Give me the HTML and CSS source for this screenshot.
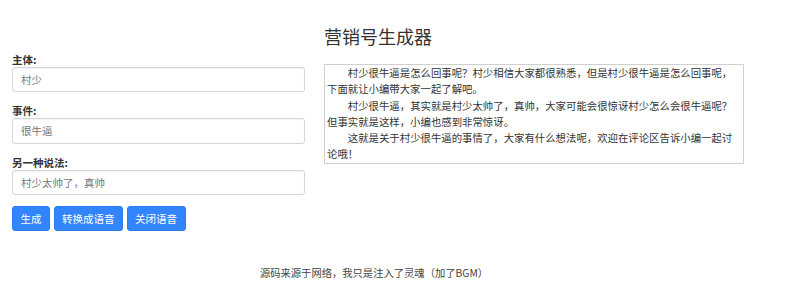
FILE: index.html
```html
<!DOCTYPE html>
<html lang="zh-CN">
<head>
<meta charset="utf-8">
<title>营销号生成器</title>
<link rel="stylesheet" href="styles.css">
</head>
<body>
<div class="page">
  <h1 class="title">营销号生成器</h1>
  <div class="row">
    <form class="form" onsubmit="return false">
      <div class="group">
        <label class="label">主体:</label>
        <input class="input" type="text" value="村少">
      </div>
      <div class="group">
        <label class="label">事件:</label>
        <input class="input" type="text" value="很牛逼">
      </div>
      <div class="group">
        <label class="label">另一种说法:</label>
        <input class="input" type="text" value="村少太帅了，真帅">
      </div>
      <div class="buttons">
        <button class="btn" type="button">生成</button>
        <button class="btn" type="button">转换成语音</button>
        <button class="btn" type="button">关闭语音</button>
      </div>
    </form>
    <div class="output">
      <p class="para">村少很牛逼是怎么回事呢？村少相信大家都很熟悉，但是村少很牛逼是怎么回事呢，下面就让小编带大家一起了解吧。</p>
      <p class="para">村少很牛逼，其实就是村少太帅了，真帅，大家可能会很惊讶村少怎么会很牛逼呢？但事实就是这样，小编也感到非常惊讶。</p>
      <p class="para">这就是关于村少很牛逼的事情了，大家有什么想法呢，欢迎在评论区告诉小编一起讨论哦！</p>
    </div>
  </div>
  <p class="footer">源码来源于网络，我只是注入了灵魂（加了BGM）</p>
</div>
</body>
</html>
```

FILE: styles.css
```css
html, body {
  margin: 0;
  padding: 0;
  background: #fff;
}

body {
  font-family: "Noto Sans CJK SC", "Noto Sans", "Liberation Sans", sans-serif;
  color: #333;
  font-size: 10.5px;
}

.page {
  width: 732px;
  padding: 0 0 0 12px;
}

.title {
  margin: 26px 0 0;
  font-size: 18px;
  line-height: 20px;
  font-weight: 400;
  text-align: center;
  color: #333;
}

.row {
  display: flex;
  align-items: flex-start;
  gap: 19px;
  margin-top: 5.5px;
}

.form {
  width: 293px;
  margin: 0;
}

.group {
  margin-bottom: 11px;
}

.label {
  display: block;
  font-size: 10.5px;
  line-height: 15px;
  font-weight: 700;
  color: #333;
}

.input {
  display: block;
  box-sizing: border-box;
  width: 100%;
  height: 25.5px;
  margin: 0;
  padding: 0 8px;
  border: 1px solid #d6d6d6;
  border-radius: 3px;
  box-shadow: inset 0 1px 1px rgba(0, 0, 0, 0.05);
  font-family: inherit;
  font-size: 10.5px;
  color: #777;
  background: #fff;
}

.buttons {
  display: flex;
  gap: 3.5px;
}

.btn {
  box-sizing: border-box;
  height: 25px;
  margin: 0;
  padding: 0 7.5px;
  border: 1px solid #2a7cf0;
  border-radius: 3px;
  background: #3385ff;
  color: #fff;
  font-family: inherit;
  font-size: 10.5px;
  line-height: 23px;
}

.output {
  box-sizing: border-box;
  width: 420px;
  margin-top: 12.5px;
  padding: 0 2px;
  border: 1px solid #d0d0d0;
  font-size: 10.4px;
  line-height: 16.3px;
  color: #333;
}

.para {
  margin: 0;
  text-indent: 2em;
}

.footer {
  margin: 33.5px 0 0;
  padding-right: 8px;
  text-align: center;
  font-size: 10.3px;
  line-height: 15px;
  color: #444;
}
```
